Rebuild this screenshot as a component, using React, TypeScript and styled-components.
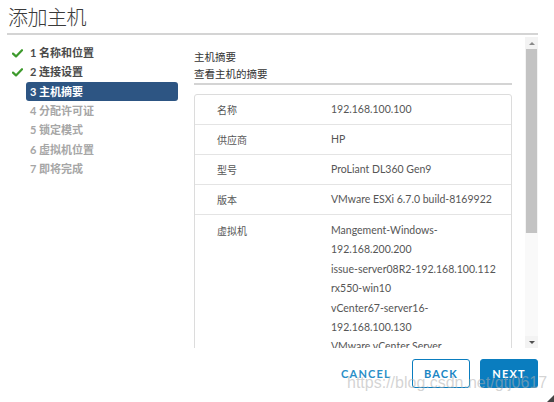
import styled, { createGlobalStyle } from "styled-components";

const GlobalStyle = createGlobalStyle`
  html, body {
    margin: 0;
    padding: 0;
    background: #ffffff;
  }
  * {
    box-sizing: border-box;
  }
`;

const steps = [
  { label: "1 名称和位置", state: "done" },
  { label: "2 连接设置", state: "done" },
  { label: "3 主机摘要", state: "active" },
  { label: "4 分配许可证", state: "todo" },
  { label: "5 锁定模式", state: "todo" },
  { label: "6 虚拟机位置", state: "todo" },
  { label: "7 即将完成", state: "todo" },
] as const;

type StepState = (typeof steps)[number]["state"];

const summary = [
  { label: "名称", values: ["192.168.100.100"] },
  { label: "供应商", values: ["HP"] },
  { label: "型号", values: ["ProLiant DL360 Gen9"] },
  { label: "版本", values: ["VMware ESXi 6.7.0 build-8169922"] },
  {
    label: "虚拟机",
    values: [
      "Mangement-Windows-",
      "192.168.200.200",
      "issue-server08R2-192.168.100.112",
      "rx550-win10",
      "vCenter67-server16-",
      "192.168.100.130",
      "VMware vCenter Server",
      "Appliance",
    ],
  },
];

export default function App() {
  return (
    <>
      <GlobalStyle />
      <StyledWizard>
        <StyledTitle>添加主机</StyledTitle>
        <StyledBody>
          <StyledNav>
            {steps.map((step) => (
              <StyledStep key={step.label}>
                <StyledCheckSlot>
                  {step.state === "done" && <CheckIcon />}
                </StyledCheckSlot>
                <StyledStepLabel $state={step.state}>{step.label}</StyledStepLabel>
              </StyledStep>
            ))}
          </StyledNav>

          <StyledMain>
            <StyledScrollContent>
              <StyledPageHeader>
                <div>主机摘要</div>
                <div>查看主机的摘要</div>
              </StyledPageHeader>
              <StyledTable>
                {summary.map((row) => (
                  <StyledRow key={row.label} $multi={row.values.length > 1}>
                    <StyledLabel>{row.label}</StyledLabel>
                    <StyledValue>
                      {row.values.map((v) => (
                        <div key={v}>{v}</div>
                      ))}
                    </StyledValue>
                  </StyledRow>
                ))}
              </StyledTable>
            </StyledScrollContent>
            <StyledScrollbar>
              <StyledArrow $dir="up" />
              <StyledThumb />
              <StyledTrackFill />
              <StyledArrow $dir="down" />
            </StyledScrollbar>
          </StyledMain>
        </StyledBody>

        <StyledFooter>
          <StyledFlatButton>CANCEL</StyledFlatButton>
          <StyledOutlineButton>BACK</StyledOutlineButton>
          <StyledPrimaryButton>NEXT</StyledPrimaryButton>
          <StyledWatermark>https://blog.csdn.net/gtj0617</StyledWatermark>
        </StyledFooter>
        <StyledResizeHandle />
      </StyledWizard>
    </>
  );
}

function CheckIcon() {
  return (
    <svg width="11" height="9" viewBox="0 0 11 9">
      <path
        d="M1 4.6 L4 7.4 L10 1.2"
        fill="none"
        stroke="#3d9a2c"
        strokeWidth="2.2"
        strokeLinecap="round"
        strokeLinejoin="round"
      />
    </svg>
  );
}

const StyledWizard = styled.div`
  position: relative;
  width: 554px;
  height: 402px;
  overflow: hidden;
  display: flex;
  flex-direction: column;
  font-family: "Lato", "Noto Sans CJK SC", sans-serif;
  color: #565656;
`;

const StyledTitle = styled.div`
  margin: 0 16px 0 7px;
  padding: 3px 0 0 1px;
  height: 35px;
  font-family: "Noto Sans CJK SC", sans-serif;
  font-size: 20px;
  font-weight: 300;
  line-height: 28px;
  letter-spacing: -0.5px;
  color: #3a3a3a;
  border-bottom: 2px solid #d4d4d4;
`;

const StyledBody = styled.div`
  display: flex;
  height: 313px;
`;

const StyledNav = styled.div`
  width: 194px;
  padding-top: 8px;
  display: flex;
  flex-direction: column;
`;

const StyledStep = styled.div`
  display: flex;
  align-items: center;
  height: 19.3px;
`;

const StyledCheckSlot = styled.div`
  width: 26px;
  display: flex;
  justify-content: flex-end;
  padding-right: 3px;
  padding-top: 1px;
`;

const StyledStepLabel = styled.div<{ $state: StepState }>`
  width: 152px;
  height: 19px;
  padding-left: 4px;
  border-radius: 3px;
  font-size: 11px;
  line-height: 19px;
  font-weight: 700;
  background: ${({ $state }) => ($state === "active" ? "#2d5583" : "transparent")};
  color: ${({ $state }) =>
    $state === "active" ? "#ffffff" : $state === "done" ? "#4a4a4a" : "#a6a6a6"};
`;

const StyledMain = styled.div`
  flex: 1;
  display: flex;
  gap: 13px;
  padding-top: 2px;
  padding-right: 16px;
`;

const StyledScrollContent = styled.div`
  width: 318px;
  overflow: hidden;
`;

const StyledPageHeader = styled.div`
  padding-top: 11px;
  padding-bottom: 1px;
  font-family: "Noto Sans CJK SC", sans-serif;
  font-size: 10.5px;
  line-height: 17px;
  color: #333333;
  border-bottom: 2px solid #d4d4d4;
`;

const StyledTable = styled.div`
  margin-top: 9px;
  border: 1px solid #dcdcdc;
  border-radius: 3px;
`;

const StyledRow = styled.div<{ $multi: boolean }>`
  display: flex;
  align-items: ${({ $multi }) => ($multi ? "flex-start" : "center")};
  min-height: 30px;
  padding: ${({ $multi }) => ($multi ? "6px 0 4px" : "0")};
  border-top: 1px solid #e4e4e4;
  &:first-child {
    border-top: none;
    min-height: 29px;
  }
`;

const StyledLabel = styled.div`
  width: 136px;
  padding-left: 22px;
  font-family: "Noto Sans CJK SC", sans-serif;
  font-size: 10px;
  line-height: 19.4px;
  color: #565656;
`;

const StyledValue = styled.div`
  font-size: 10.5px;
  line-height: 19.4px;
  color: #565656;
  white-space: nowrap;
`;

const StyledScrollbar = styled.div`
  width: 13px;
  height: 311px;
  display: flex;
  flex-direction: column;
  background: #f3f3f3;
`;

const StyledArrow = styled.div<{ $dir: "up" | "down" }>`
  height: 12px;
  display: flex;
  align-items: center;
  justify-content: center;
  &::before {
    content: "";
    width: 0;
    height: 0;
    border-left: 3px solid transparent;
    border-right: 3px solid transparent;
    ${({ $dir }) =>
      $dir === "up" ? "border-bottom: 3px solid #8a8a8a;" : "border-top: 3px solid #505050;"}
  }
`;

const StyledThumb = styled.div`
  height: 184px;
  margin: 0 1px;
  background: #c3c3c3;
`;

const StyledTrackFill = styled.div`
  flex: 1;
  background: #f9f9f9;
`;

const StyledFooter = styled.div`
  position: relative;
  display: flex;
  justify-content: flex-end;
  align-items: center;
  gap: 10px;
  padding: 11px 16px 0 0;
`;

const buttonBase = `
  height: 29px;
  font-family: "Lato", sans-serif;
  font-size: 11px;
  font-weight: 700;
  letter-spacing: 1.2px;
  border-radius: 3px;
  cursor: pointer;
`;

const StyledFlatButton = styled.button`
  ${buttonBase}
  margin-right: 11px;
  padding: 0;
  border: none;
  background: transparent;
  color: #2a8fc8;
`;

const StyledOutlineButton = styled.button`
  ${buttonBase}
  width: 58px;
  border: 1px solid #0a7dbf;
  background: #ffffff;
  color: #1a86c4;
`;

const StyledPrimaryButton = styled.button`
  ${buttonBase}
  width: 58px;
  border: 1px solid #0a7dbf;
  background: #0a7dbf;
  color: #ffffff;
`;

const StyledWatermark = styled.div`
  position: absolute;
  left: 347px;
  top: 27px;
  font-family: "Liberation Sans", Arial, sans-serif;
  font-size: 16px;
  line-height: 16px;
  color: rgba(175, 175, 175, 0.55);
  pointer-events: none;
  white-space: nowrap;
`;

const StyledResizeHandle = styled.div`
  position: absolute;
  right: 0;
  bottom: 0;
  width: 0;
  height: 0;
  border-left: 7px solid transparent;
  border-bottom: 7px solid #444444;
`;
